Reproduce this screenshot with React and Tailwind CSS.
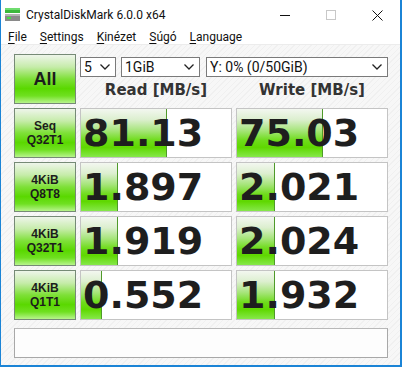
import React from 'react';

const rows = [
  { l1: 'Seq', l2: 'Q32T1', read: '81.13', rw: 86, write: '75.03', ww: 86 },
  { l1: '4KiB', l2: 'Q8T8', read: '1.897', rw: 37, write: '2.021', ww: 38 },
  { l1: '4KiB', l2: 'Q32T1', read: '1.919', rw: 37, write: '2.024', ww: 38 },
  { l1: '4KiB', l2: 'Q1T1', read: '0.552', rw: 21, write: '1.932', ww: 38 },
];

function Combo({ className, children }) {
  return (
    <div className={`h-[20px] flex items-center justify-between bg-white border border-[#7a7a7a] pl-[3px] pr-[5px] text-[14px] text-[#111] ${className}`}>
      <span className="leading-none">{children}</span>
      <svg width="10" height="6" viewBox="0 0 10 6">
        <polyline points="0.5,0.5 5,5 9.5,0.5" fill="none" stroke="#222" strokeWidth="1.3" />
      </svg>
    </div>
  );
}

function GreenButton({ children, className }) {
  return (
    <div className={`h-[50px] flex flex-col items-center justify-center border border-[#768a76] bg-[linear-gradient(to_bottom,#eef5ea_0%,#c6ecaa_25%,#7ee038_50%,#5ad800_70%,#6fe020_85%,#b7f48c_100%)] text-[#1c1c1c] font-bold font-['Liberation_Sans',sans-serif] ${className}`}>
      {children}
    </div>
  );
}

function Cell({ value, w }) {
  return (
    <div className="relative h-[50px] border border-[#c4c4c4] bg-white">
      <div
        className="absolute left-0 top-0 bottom-0 border-r border-[#4f9a2a] bg-[linear-gradient(to_bottom,#f3f7f0_0%,#dcefcf_22%,#a6e57a_45%,#6fdc1c_65%,#5fd800_80%,#86e84a_100%)]"
        style={{ width: w }}
      />
      <div className="relative h-full flex items-center pl-[2px] font-['DejaVu_Sans',sans-serif] font-bold text-[38px] leading-none text-[#1e1e1e]">
        {value}
      </div>
    </div>
  );
}

function Menu({ k, rest }) {
  return (
    <span>
      <span className="underline underline-offset-2 decoration-1">{k}</span>
      {rest}
    </span>
  );
}

export default function App() {
  return (
    <div className="w-[402px] h-[367px] flex flex-col bg-white border-l border-r-2 border-b-2 border-[#1b84d6] font-['Roboto',sans-serif] overflow-hidden">
      {/* title bar */}
      <div className="h-[30px] flex items-center bg-white">
        <svg className="ml-[3px]" width="17" height="16" viewBox="0 0 17 16">
          <rect x="1" y="1" width="15" height="5" fill="#3cb83c" />
          <rect x="1" y="1" width="15" height="2" fill="#6fdc6f" />
          <rect x="1" y="7" width="15" height="7" fill="#8a8a8a" />
          <rect x="1" y="7" width="15" height="2" fill="#b4b4b4" />
          <rect x="3" y="10" width="4" height="2" fill="#44dd44" />
        </svg>
        <span className="ml-[5px] text-[12px] text-[#111]">CrystalDiskMark 6.0.0 x64</span>
        <div className="ml-auto flex items-center h-full">
          <div className="w-[46px] h-full flex items-center justify-center">
            <div className="w-[10px] h-px bg-[#111]" />
          </div>
          <div className="w-[46px] h-full flex items-center justify-center">
            <div className="w-[10px] h-[10px] border border-[#c8c8c8]" />
          </div>
          <div className="w-[46px] h-full flex items-center justify-center">
            <svg width="11" height="11" viewBox="0 0 11 11">
              <path d="M0.5 0.5 L10.5 10.5 M10.5 0.5 L0.5 10.5" stroke="#111" strokeWidth="1" />
            </svg>
          </div>
        </div>
      </div>

      {/* menu bar */}
      <div className="h-[14px] flex items-center gap-[13px] pl-[7px] text-[12px] text-[#111] leading-none bg-white">
        <Menu k="F" rest="ile" />
        <Menu k="S" rest="ettings" />
        <Menu k="K" rest="inézet" />
        <Menu k="S" rest="úgó" />
        <Menu k="L" rest="anguage" />
      </div>

      {/* body */}
      <div className="flex-1 border-t border-[#ececec] pl-[13px] pt-[9px] bg-[#f4f4f4] bg-[repeating-linear-gradient(135deg,#f7f7f7_0px,#f7f7f7_3px,#f0f0f0_3px,#f0f0f0_4px)]">
        <div className="grid grid-cols-[62px_152px_152px] gap-[4px]">
          <GreenButton className="text-[18px]">All</GreenButton>
          <div className="col-span-2 flex flex-col">
            <div className="flex mt-[3px] gap-[5px]">
              <Combo className="w-[36px]">5</Combo>
              <Combo className="w-[79px]">1GiB</Combo>
              <Combo className="w-[182px] ml-px">Y: 0% (0/50GiB)</Combo>
            </div>
            <div className="flex-1 grid grid-cols-2 gap-[4px] items-center font-['DejaVu_Sans',sans-serif] font-bold text-[15px] text-[#333] text-center">
              <span>Read [MB/s]</span>
              <span>Write [MB/s]</span>
            </div>
          </div>

          {rows.map((r, i) => (
            <React.Fragment key={i}>
              <GreenButton className="text-[12px] leading-[14px]">
                <span>{r.l1}</span>
                <span>{r.l2}</span>
              </GreenButton>
              <Cell value={r.read} w={r.rw} />
              <Cell value={r.write} w={r.ww} />
            </React.Fragment>
          ))}
        </div>
        <div className="mt-[8px] w-[374px] h-[30px] bg-[#fdfdfd] border border-[#a8a8a8] border-t-[#b8b8b8]" />
      </div>
    </div>
  );
}
